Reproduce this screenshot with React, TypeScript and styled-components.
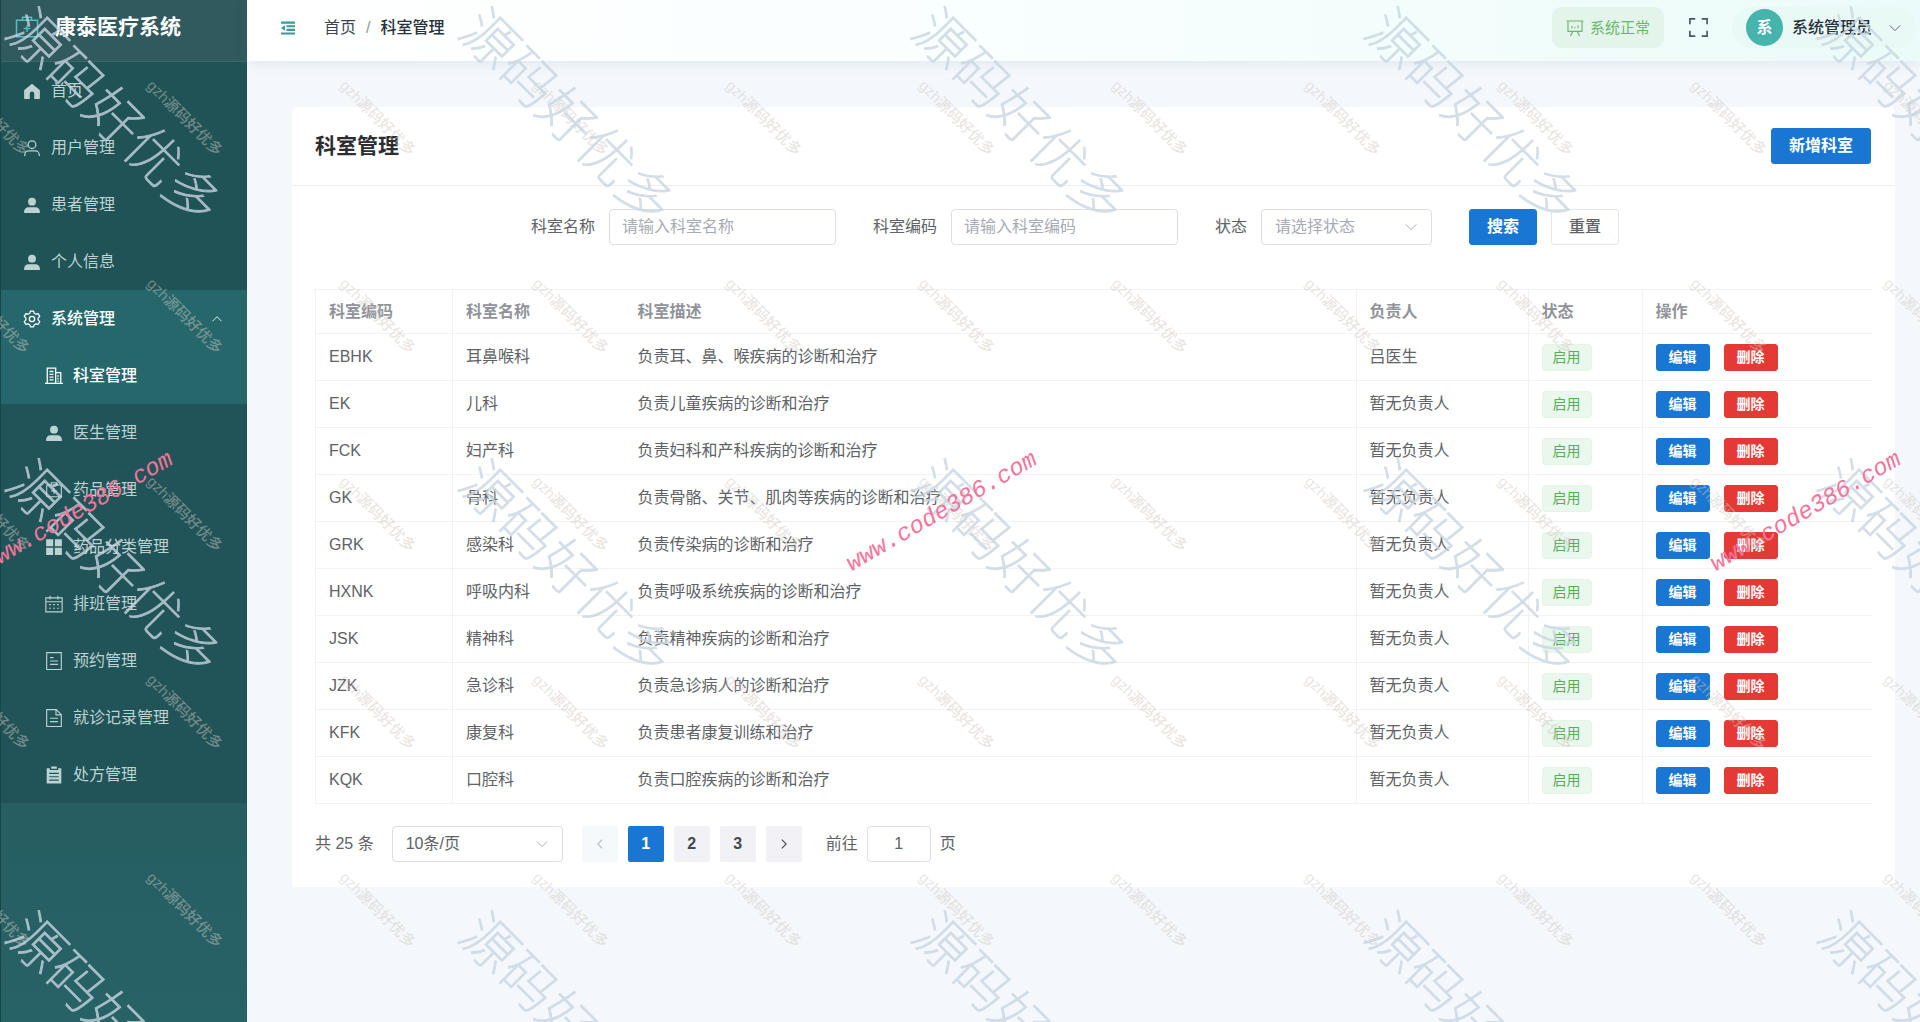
import React from "react";
import styled, { createGlobalStyle, css } from "styled-components";

const GlobalStyle = createGlobalStyle`
  *, *::before, *::after { box-sizing: border-box; }
  html, body, #root { height: 100%; }
  body {
    margin: 0;
    background: #f4f8fc;
    color: #606266;
    font-family: "Liberation Sans", "Noto Sans CJK SC", sans-serif;
    font-size: 16px;
    line-height: 24px;
  }
  button, input, select { font: inherit; color: inherit; margin: 0; }
  ul { list-style: none; margin: 0; padding: 0; }
  a { color: inherit; text-decoration: none; }
`;

/* ---------- icons (1024 grid) ---------- */

const icons: Record<string, React.ReactNode> = {
  logo: (
    <g fill="none" stroke="currentColor" strokeWidth="64">
      <path d="M64 224h896v704H64z" />
      <path d="M320 224V96h384v128M512 432v288M368 576h288" />
    </g>
  ),
  home: <path d="M512 96 64 464v464a32 32 0 0 0 32 32h288V672a128 128 0 0 1 256 0v288h288a32 32 0 0 0 32-32V464z" />,
  userLine: (
    <g fill="none" stroke="currentColor" strokeWidth="72">
      <circle cx="512" cy="320" r="220" />
      <path d="M100 960v-60a220 220 0 0 1 220-220h384a220 220 0 0 1 220 220v60" />
    </g>
  ),
  userFill: <path d="M288 320a224 224 0 1 0 448 0 224 224 0 1 0-448 0zM960 960H64v-80c0-130 110-240 240-240h416c130 0 240 110 240 240z" />,
  gear: (
    <g fill="none" stroke="currentColor" strokeWidth="72" strokeLinejoin="round">
      <path d="M420 60h184l36 128 92 52 128-32 92 158-92 96v100l92 96-92 158-128-32-92 52-36 128H420l-36-128-92-52-128 32-92-158 92-96V462l-92-96 92-158 128 32 92-52z" />
      <circle cx="512" cy="512" r="150" />
    </g>
  ),
  office: (
    <g fill="none" stroke="currentColor" strokeWidth="72">
      <path d="M128 928V64h480v864M608 320h288v608M0 928h1024" />
      <path d="M256 256h224M256 416h224M256 576h224M256 736h224M704 512h80M704 656h80M704 800h80" />
    </g>
  ),
  firstAid: (
    <g fill="none" stroke="currentColor" strokeWidth="64">
      <rect x="96" y="224" width="832" height="672" rx="64" />
      <path d="M352 224V96h320v128M512 400v320M352 560h320" />
    </g>
  ),
  grid: <path d="M64 64h400v400H64zM560 64h400v400H560zM64 560h400v400H64zM560 560h400v400H560z" />,
  calendar: (
    <g fill="none" stroke="currentColor" strokeWidth="64">
      <path d="M48 160h928v800H48zM48 384h928M288 48v208M736 48v208" />
      <path d="M240 544h96M464 544h96M688 544h96M240 752h96M464 752h96M688 752h96" />
    </g>
  ),
  tickets: (
    <g fill="none" stroke="currentColor" strokeWidth="64">
      <path d="M96 32h832v960H96zM288 320h192M288 512h448M288 704h448" />
    </g>
  ),
  document: (
    <g fill="none" stroke="currentColor" strokeWidth="64">
      <path d="M96 32h544l288 288v672H96zM624 32v304h304M288 528h448M288 720h448" />
    </g>
  ),
  clipboard: (
    <path
      fillRule="evenodd"
      d="M352 32h320v128H352zM96 128h176v96h480v-96h176v864H96zM240 384v64h544v-64zM240 576v64h544v-64zM240 768v64h544v-64z"
    />
  ),
  up: <path fill="none" stroke="currentColor" strokeWidth="72" d="M128 704l384-384 384 384" />,
  down: <path fill="none" stroke="currentColor" strokeWidth="72" d="M128 320l384 384 384-384" />,
  left: <path fill="none" stroke="currentColor" strokeWidth="80" d="M672 192L352 512l320 320" />,
  right: <path fill="none" stroke="currentColor" strokeWidth="80" d="M352 192l320 320-320 320" />,
  fold: <path d="M64 96h896v136H64zM416 328h544v136H416zM416 560h544v136H416zM64 792h896v136H64zM64 512l256-176v352z" />,
  board: (
    <g fill="none" stroke="currentColor" strokeWidth="64">
      <path d="M32 112h960M112 112v592h800V112M384 704L256 960M640 704l128 256M336 400v128M512 448v80M688 352v176" />
    </g>
  ),
  fullscreen: (
    <g fill="none" stroke="currentColor" strokeWidth="88">
      <path d="M48 336V48h288M688 48h288v288M976 688v288H688M336 976H48V688" />
    </g>
  ),
};

const Svg = styled.svg<{ $size: number }>`
  flex: none;
  display: block;
  width: ${(p) => p.$size}px;
  height: ${(p) => p.$size}px;
  fill: currentColor;
`;

const Icon = ({ name, size = 18 }: { name: string; size?: number }) => (
  <Svg $size={size} viewBox="0 0 1024 1024" aria-hidden="true">
    {icons[name]}
  </Svg>
);

/* ---------- shell ---------- */

const Shell = styled.div`
  position: relative;
  display: grid;
  grid-template-columns: 247px minmax(0, 1fr);
  min-height: 100%;
  overflow: hidden;
`;

const Sidebar = styled.aside`
  background: linear-gradient(180deg, #2a5f62 0%, #265d60 70%, #276267 100%);
  border-left: 1px solid #174548;
  color: #bdd2d2;
`;

const Brand = styled.div`
  display: flex;
  align-items: center;
  gap: 16px;
  height: 62px;
  padding: 0 0 7px 14px;
  background: #305a5d;
  border-bottom: 1px solid #3b686b;
  color: #fff;
  font-size: 21px;
  font-weight: 700;
  svg { color: #4fc0c4; }
`;

const rowStyle = css<{ $active?: boolean }>`
  display: flex;
  align-items: center;
  width: 100%;
  height: 57px;
  border: 0;
  background: ${(p) => (p.$active ? "#25676b" : "transparent")};
  color: ${(p) => (p.$active ? "#fff" : "inherit")};
  font-weight: ${(p) => (p.$active ? 500 : 400)};
  text-align: left;
  cursor: pointer;
`;

const Menu = styled.ul`
  background: #1f5356;
`;

const MenuLink = styled.a<{ $active?: boolean }>`
  ${rowStyle}
  gap: 10px;
  padding: 0 24px 0 22px;
`;

const MenuToggle = styled.button<{ $active?: boolean }>`
  ${rowStyle}
  gap: 10px;
  padding: 0 24px 0 22px;
  span { flex: 1; }
`;

const SubMenu = styled.ul`
  background: #215458;
`;

const SubLink = styled.a<{ $active?: boolean }>`
  ${rowStyle}
  gap: 10px;
  padding: 0 24px 0 44px;
`;

const Main = styled.div`
  display: flex;
  flex-direction: column;
  min-width: 0;
`;

const TopBar = styled.header`
  position: relative;
  display: flex;
  align-items: center;
  height: 61px;
  padding: 0 4px 6px 33px;
  background: linear-gradient(90deg, #ffffff 0%, #f8fefe 50%, #ebfbf9 100%);
  box-shadow: 0 2px 12px rgba(60, 110, 140, 0.12);
  color: #303c48;
`;

const IconButton = styled.button<{ $tone: string }>`
  display: flex;
  padding: 0;
  border: 0;
  background: none;
  color: ${(p) => p.$tone};
  cursor: pointer;
`;

const Crumbs = styled.nav`
  display: flex;
  flex: 1;
  gap: 10px;
  padding-left: 28px;
  color: #3d4650;
  i { color: #8f989f; font-style: normal; }
  strong { color: #26313c; font-weight: 500; }
`;

const Status = styled.div`
  display: flex;
  align-items: center;
  gap: 6px;
  height: 41px;
  margin-right: 25px;
  padding: 0 14px;
  border-radius: 9px;
  background: #e3f5ea;
  color: #6bb56f;
  font-size: 15px;
`;

const Account = styled.button`
  display: flex;
  align-items: center;
  gap: 9px;
  height: 41px;
  margin-left: 24px;
  padding: 0 14px;
  border: 0;
  border-radius: 21px;
  background: #e8f9f6;
  color: #26313c;
  font-weight: 500;
  cursor: pointer;
  svg { margin-left: 7px; color: #5c6b75; }
`;

const Avatar = styled.span`
  display: grid;
  place-items: center;
  width: 37px;
  height: 37px;
  border-radius: 50%;
  background: #44b4ac;
  color: #fff;
  font-weight: 700;
`;

/* ---------- card ---------- */

const Card = styled.section`
  margin: 46px 25px 24px 45px;
  border-radius: 4px;
  background: #fff;
`;

const CardHead = styled.div`
  display: flex;
  align-items: center;
  justify-content: space-between;
  height: 79px;
  padding: 0 24px 0 23px;
  border-bottom: 1px solid #ebeef2;
`;

const Title = styled.h1`
  margin: 0;
  color: #2b2d30;
  font-size: 21px;
  font-weight: 700;
`;

const CardBody = styled.div`
  padding: 23px 23px 25px;
`;

const tones = {
  primary: ["#1976d2", "#fff", "#1976d2"],
  danger: ["#e53935", "#fff", "#e53935"],
  plain: ["#fff", "#606266", "#e2e6ed"],
};

const Button = styled.button<{ $tone: keyof typeof tones; $small?: boolean }>`
  height: ${(p) => (p.$small ? 27 : 36)}px;
  padding: 0 ${(p) => (p.$small ? 12 : 17)}px;
  border: 1px solid ${(p) => tones[p.$tone][2]};
  border-radius: 3px;
  background: ${(p) => tones[p.$tone][0]};
  color: ${(p) => tones[p.$tone][1]};
  font-size: ${(p) => (p.$small ? 14 : 16)}px;
  font-weight: ${(p) => (p.$tone === "plain" ? 500 : 700)};
  line-height: 20px;
  cursor: pointer;
`;

const Filters = styled.form`
  display: flex;
  flex-wrap: wrap;
  justify-content: center;
  margin-bottom: 44px;
`;

const Field = styled.div`
  display: flex;
  align-items: center;
  gap: 14px;
  margin-right: 37px;
`;

const boxStyle = css`
  height: 36px;
  border: 1px solid #dcdfe6;
  border-radius: 4px;
  background: #fff;
`;

const TextBox = styled.input<{ $width: number; $center?: boolean }>`
  ${boxStyle}
  width: ${(p) => p.$width}px;
  padding: 0 12px;
  text-align: ${(p) => (p.$center ? "center" : "left")};
  &::placeholder { color: #a8abb2; opacity: 1; }
`;

const SelectWrap = styled.div`
  display: grid;
  align-items: center;
  width: 171px;
  > * { grid-area: 1 / 1; }
  svg { justify-self: end; margin-right: 14px; color: #a8abb2; pointer-events: none; }
`;

const Select = styled.select<{ $muted?: boolean }>`
  ${boxStyle}
  width: 100%;
  padding: 0 32px 0 13px;
  appearance: none;
  color: ${(p) => (p.$muted ? "#a8abb2" : "#606266")};
`;

const Table = styled.table`
  width: 100%;
  border-collapse: collapse;
  table-layout: fixed;
  border: 1px solid #f1f2f4;
  border-right: 0;
  th, td {
    padding: 0 13px;
    border-bottom: 1px solid #f1f2f4;
    text-align: left;
    white-space: nowrap;
  }
  th { height: 44px; color: #909399; font-weight: 700; }
  td { height: 47px; }
  th:not(:last-child):not(:nth-child(2)),
  td:not(:last-child):not(:nth-child(2)) { border-right: 1px solid #f1f2f4; }
`;

const Col = styled.col<{ $width?: number }>`
  width: ${(p) => (p.$width ? `${p.$width}px` : "auto")};
`;

const Tag = styled.span`
  display: inline-block;
  height: 27px;
  padding: 0 10px;
  border: 1px solid #e4f4e6;
  border-radius: 4px;
  background: #eaf7ec;
  color: #58ac5c;
  font-size: 14px;
  line-height: 25px;
  vertical-align: middle;
`;

const Actions = styled.div`
  display: flex;
  gap: 14px;
`;

const Pager = styled.div`
  display: flex;
  align-items: center;
  margin-top: 22px;
`;

const Pages = styled.div`
  display: flex;
  gap: 10px;
  margin: 0 24px 0 19px;
`;

const PageButton = styled.button<{ $current?: boolean }>`
  display: grid;
  place-items: center;
  width: 36px;
  height: 36px;
  padding: 0;
  border: 0;
  border-radius: 2px;
  background: ${(p) => (p.$current ? "#1976d2" : "#f1f1f6")};
  color: ${(p) => (p.$current ? "#fff" : "#45484d")};
  font-weight: 700;
  &:disabled { background: #f6f9fc; color: #b4b8bf; }
`;

const Jump = styled.label`
  display: flex;
  align-items: center;
  gap: 9px;
`;

const PageSize = styled.label`
  margin-left: 18px;
`;

/* ---------- watermark layers ---------- */

const Layer = styled.div<{ $cols: number; $w: number; $h: number; $x: number; $y: number }>`
  position: absolute;
  left: ${(p) => p.$x}px;
  top: ${(p) => p.$y}px;
  display: grid;
  grid-template-columns: repeat(${(p) => p.$cols}, ${(p) => p.$w}px);
  grid-auto-rows: ${(p) => p.$h}px;
  place-items: center;
  pointer-events: none;
  white-space: nowrap;
  user-select: none;
`;

const BigMark = styled.span`
  transform: rotate(45deg);
  color: #c9d6e2;
  opacity: 0.8;
  font-family: "Noto Sans CJK SC", sans-serif;
  font-size: 55px;
  font-weight: 100;
  line-height: 60px;
  -webkit-text-stroke: 1px #c9d6e2;
`;

const SmallMark = styled.span`
  transform: rotate(45deg);
  color: rgba(208, 200, 194, 0.48);
  font-size: 15px;
  font-weight: 500;
`;

const LinkMark = styled.span`
  transform: rotate(-30deg);
  color: #f4759c;
  font-family: "Liberation Mono", monospace;
  font-size: 24px;
  font-style: italic;
`;

const repeat = (n: number, render: (i: number) => React.ReactNode) =>
  Array.from({ length: n }, (_, i) => render(i));

/* ---------- data ---------- */

const topItems = [
  ["home", "首页"],
  ["userLine", "用户管理"],
  ["userFill", "患者管理"],
  ["userFill", "个人信息"],
];

const subItems = [
  ["office", "科室管理"],
  ["userFill", "医生管理"],
  ["firstAid", "药品管理"],
  ["grid", "药品分类管理"],
  ["calendar", "排班管理"],
  ["tickets", "预约管理"],
  ["document", "就诊记录管理"],
  ["clipboard", "处方管理"],
];

const departments = [
  ["EBHK", "耳鼻喉科", "负责耳、鼻、喉疾病的诊断和治疗", "吕医生"],
  ["EK", "儿科", "负责儿童疾病的诊断和治疗", "暂无负责人"],
  ["FCK", "妇产科", "负责妇科和产科疾病的诊断和治疗", "暂无负责人"],
  ["GK", "骨科", "负责骨骼、关节、肌肉等疾病的诊断和治疗", "暂无负责人"],
  ["GRK", "感染科", "负责传染病的诊断和治疗", "暂无负责人"],
  ["HXNK", "呼吸内科", "负责呼吸系统疾病的诊断和治疗", "暂无负责人"],
  ["JSK", "精神科", "负责精神疾病的诊断和治疗", "暂无负责人"],
  ["JZK", "急诊科", "负责急诊病人的诊断和治疗", "暂无负责人"],
  ["KFK", "康复科", "负责患者康复训练和治疗", "暂无负责人"],
  ["KQK", "口腔科", "负责口腔疾病的诊断和治疗", "暂无负责人"],
];

export default function App() {
  return (
    <>
      <GlobalStyle />
      <Shell>
        <Sidebar>
          <Brand>
            <Icon name="logo" size={24} />
            康泰医疗系统
          </Brand>
          <Menu>
            {topItems.map(([icon, text]) => (
              <li key={text}>
                <MenuLink href="#">
                  <Icon name={icon} />
                  {text}
                </MenuLink>
              </li>
            ))}
            <li>
              <MenuToggle type="button" $active aria-expanded="true">
                <Icon name="gear" />
                <span>系统管理</span>
                <Icon name="up" size={12} />
              </MenuToggle>
              <SubMenu>
                {subItems.map(([icon, text], i) => (
                  <li key={text}>
                    <SubLink href="#" $active={i === 0}>
                      <Icon name={icon} />
                      {text}
                    </SubLink>
                  </li>
                ))}
              </SubMenu>
            </li>
          </Menu>
        </Sidebar>

        <Main>
          <TopBar>
            <IconButton type="button" $tone="#3a9a98" aria-label="折叠菜单">
              <Icon name="fold" size={16} />
            </IconButton>
            <Crumbs>
              <a href="#">首页</a>
              <i>/</i>
              <strong>科室管理</strong>
            </Crumbs>
            <Status>
              <Icon name="board" />
              系统正常
            </Status>
            <IconButton type="button" $tone="#4a5560" aria-label="全屏">
              <Icon name="fullscreen" size={19} />
            </IconButton>
            <Account type="button">
              <Avatar>系</Avatar>
              系统管理员
              <Icon name="down" size={14} />
            </Account>
          </TopBar>

          <Card>
            <CardHead>
              <Title>科室管理</Title>
              <Button type="button" $tone="primary">新增科室</Button>
            </CardHead>
            <CardBody>
              <Filters onSubmit={(e) => e.preventDefault()}>
                <Field>
                  <label htmlFor="name">科室名称</label>
                  <TextBox id="name" $width={227} placeholder="请输入科室名称" />
                </Field>
                <Field>
                  <label htmlFor="code">科室编码</label>
                  <TextBox id="code" $width={227} placeholder="请输入科室编码" />
                </Field>
                <Field>
                  <label htmlFor="state">状态</label>
                  <SelectWrap>
                    <Select id="state" $muted defaultValue="">
                      <option value="">请选择状态</option>
                    </Select>
                    <Icon name="down" size={14} />
                  </SelectWrap>
                </Field>
                <Field>
                  <Button type="submit" $tone="primary">搜索</Button>
                  <Button type="reset" $tone="plain">重置</Button>
                </Field>
              </Filters>

              <Table>
                <colgroup>
                  <Col $width={137} />
                  <Col $width={172} />
                  <Col />
                  <Col $width={172} />
                  <Col $width={114} />
                  <Col $width={230} />
                </colgroup>
                <thead>
                  <tr>
                    <th>科室编码</th>
                    <th>科室名称</th>
                    <th>科室描述</th>
                    <th>负责人</th>
                    <th>状态</th>
                    <th>操作</th>
                  </tr>
                </thead>
                <tbody>
                  {departments.map(([code, name, desc, head]) => (
                    <tr key={code}>
                      <td>{code}</td>
                      <td>{name}</td>
                      <td>{desc}</td>
                      <td>{head}</td>
                      <td><Tag>启用</Tag></td>
                      <td>
                        <Actions>
                          <Button type="button" $tone="primary" $small>编辑</Button>
                          <Button type="button" $tone="danger" $small>删除</Button>
                        </Actions>
                      </td>
                    </tr>
                  ))}
                </tbody>
              </Table>

              <Pager>
                <span>共 25 条</span>
                <PageSize>
                  <SelectWrap>
                    <Select aria-label="每页条数">
                      <option>10条/页</option>
                    </Select>
                    <Icon name="down" size={14} />
                  </SelectWrap>
                </PageSize>
                <Pages>
                  <PageButton type="button" disabled aria-label="上一页">
                    <Icon name="left" size={14} />
                  </PageButton>
                  <PageButton type="button" $current>1</PageButton>
                  <PageButton type="button">2</PageButton>
                  <PageButton type="button">3</PageButton>
                  <PageButton type="button" aria-label="下一页">
                    <Icon name="right" size={14} />
                  </PageButton>
                </Pages>
                <Jump>
                  前往
                  <TextBox $width={64} $center defaultValue="1" />
                  页
                </Jump>
              </Pager>
            </CardBody>
          </Card>
        </Main>

        <Layer aria-hidden="true" $cols={11} $w={193} $h={198} $x={-105} $y={19}>
          {repeat(55, (i) => <SmallMark key={i}>gzh源码好优多</SmallMark>)}
        </Layer>
        <Layer aria-hidden="true" $cols={5} $w={453} $h={452} $x={-109} $y={-112}>
          {repeat(15, (i) => <BigMark key={i}>源码好优多</BigMark>)}
        </Layer>
        <Layer aria-hidden="true" $cols={3} $w={864} $h={120} $x={-354} $y={452}>
          {repeat(3, (i) => <LinkMark key={i}>www.code386.com</LinkMark>)}
        </Layer>
      </Shell>
    </>
  );
}
